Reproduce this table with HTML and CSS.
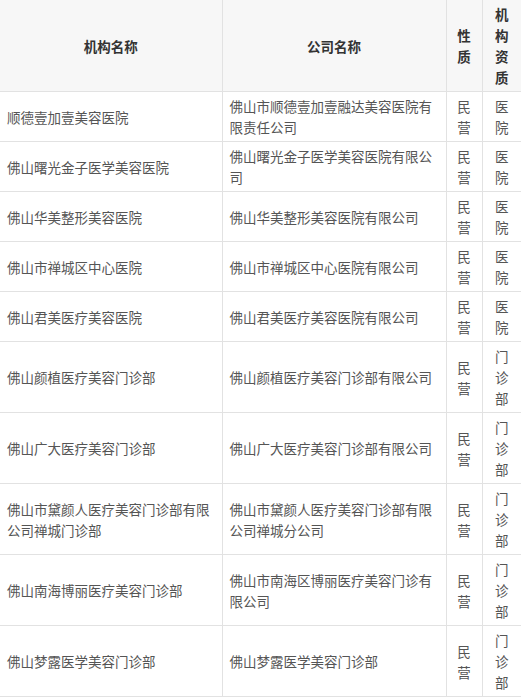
FILE: index.html
```
<!DOCTYPE html>
<html lang="zh-CN">
<head>
<meta charset="utf-8">
<link rel="stylesheet" href="styles.css">
</head>
<body>
<table class="grid">
  <colgroup>
    <col class="c1"><col class="c2"><col class="c3"><col class="c4">
  </colgroup>
  <thead>
    <tr><th>机构名称</th><th>公司名称</th><th class="n">性质</th><th class="n">机构资质</th></tr>
  </thead>
  <tbody>
    <tr><td>顺德壹加壹美容医院</td><td>佛山市顺德壹加壹融达美容医院有限责任公司</td><td class="n">民营</td><td class="n">医院</td></tr>
    <tr><td>佛山曙光金子医学美容医院</td><td>佛山曙光金子医学美容医院有限公司</td><td class="n">民营</td><td class="n">医院</td></tr>
    <tr><td>佛山华美整形美容医院</td><td>佛山华美整形美容医院有限公司</td><td class="n">民营</td><td class="n">医院</td></tr>
    <tr><td>佛山市禅城区中心医院</td><td>佛山市禅城区中心医院有限公司</td><td class="n">民营</td><td class="n">医院</td></tr>
    <tr><td>佛山君美医疗美容医院</td><td>佛山君美医疗美容医院有限公司</td><td class="n">民营</td><td class="n">医院</td></tr>
    <tr><td>佛山颜植医疗美容门诊部</td><td>佛山颜植医疗美容门诊部有限公司</td><td class="n">民营</td><td class="n">门诊部</td></tr>
    <tr><td>佛山广大医疗美容门诊部</td><td>佛山广大医疗美容门诊部有限公司</td><td class="n">民营</td><td class="n">门诊部</td></tr>
    <tr><td>佛山市黛颜人医疗美容门诊部有限公司禅城门诊部</td><td>佛山市黛颜人医疗美容门诊部有限公司禅城分公司</td><td class="n">民营</td><td class="n">门诊部</td></tr>
    <tr><td>佛山南海博丽医疗美容门诊部</td><td>佛山市南海区博丽医疗美容门诊有限公司</td><td class="n">民营</td><td class="n">门诊部</td></tr>
    <tr><td>佛山梦露医学美容门诊部</td><td>佛山梦露医学美容门诊部</td><td class="n">民营</td><td class="n">门诊部</td></tr>
  </tbody>
</table>
</body>
</html>
```
FILE: styles.css
```
html, body {
  margin: 0;
  padding: 0;
  background: #ffffff;
}
body {
  font-family: "Noto Sans CJK SC", "Noto Sans", sans-serif;
  font-size: 13.5px;
  color: #555555;
}
.grid {
  border-collapse: collapse;
  table-layout: fixed;
  width: 521px;
}
.c1 { width: 222px; }
.c2 { width: 224px; }
.c3 { width: 36px; }
.c4 { width: 39px; }
.grid th,
.grid td {
  border: 1px solid #e2e2e2;
  padding: 4px 7px 3px 7px;
  line-height: 21px;
  vertical-align: middle;
  word-break: break-all;
}
.grid th {
  background: #f7f7f7;
  color: #333333;
  font-weight: bold;
  text-align: center;
  border-top: none;
}
.grid td {
  text-align: left;
}
.grid th:first-child,
.grid td:first-child {
  border-left: none;
}
.grid th:last-child,
.grid td:last-child {
  border-right: none;
}
.grid .n {
  text-align: center;
  padding-left: 6px;
  padding-right: 6px;
}
```
